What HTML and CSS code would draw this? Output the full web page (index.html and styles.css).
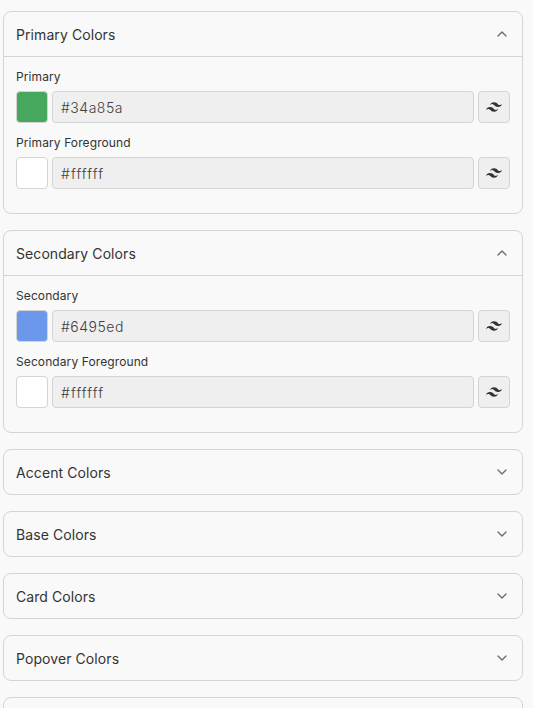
FILE: index.html
```html
<!DOCTYPE html>
<html lang="en">
<head>
<meta charset="utf-8">
<title>Theme colors</title>
<link rel="stylesheet" href="styles.css">
</head>
<body>
<svg class="defs" aria-hidden="true">
  <symbol id="up" viewBox="0 0 24 24"><path d="m18 15-6-6-6 6"/></symbol>
  <symbol id="down" viewBox="0 0 24 24"><path d="m6 9 6 6 6-6"/></symbol>
  <symbol id="tw" viewBox="0 0 24 24"><path d="M12.001 4.8c-3.2 0-5.2 1.6-6 4.8 1.2-1.6 2.6-2.2 4.2-1.8.913.228 1.565.89 2.288 1.624C13.666 10.618 15.027 12 18.001 12c3.2 0 5.2-1.6 6-4.8-1.2 1.6-2.6 2.2-4.2 1.8-.913-.228-1.565-.89-2.288-1.624C16.337 6.182 14.976 4.8 12.001 4.8zm-6 7.2c-3.2 0-5.2 1.6-6 4.8 1.2-1.6 2.6-2.2 4.2-1.8.913.228 1.565.89 2.288 1.624 1.177 1.194 2.538 2.576 5.512 2.576 3.2 0 5.2-1.6 6-4.8-1.2 1.6-2.6 2.2-4.2 1.8-.913-.228-1.565-.89-2.288-1.624C10.337 13.382 8.976 12 6.001 12z"/></symbol>
</svg>
<main class="panel">
  <section class="card">
    <header class="head"><span class="title">Primary Colors</span><svg class="chevron"><use href="#up"/></svg></header>
    <div class="body">
      <div class="field">
        <span class="label">Primary</span>
        <div class="row"><span class="swatch green"></span><span class="input"><span>#34a85a</span></span><button class="btn" aria-label="Tailwind colors"><svg class="tw"><use href="#tw"/></svg></button></div>
      </div>
      <div class="field">
        <span class="label">Primary Foreground</span>
        <div class="row"><span class="swatch"></span><span class="input"><span class="white-hex">#ffffff</span></span><button class="btn" aria-label="Tailwind colors"><svg class="tw"><use href="#tw"/></svg></button></div>
      </div>
    </div>
  </section>
  <section class="card">
    <header class="head"><span class="title">Secondary Colors</span><svg class="chevron"><use href="#up"/></svg></header>
    <div class="body">
      <div class="field">
        <span class="label">Secondary</span>
        <div class="row"><span class="swatch blue"></span><span class="input"><span>#6495ed</span></span><button class="btn" aria-label="Tailwind colors"><svg class="tw"><use href="#tw"/></svg></button></div>
      </div>
      <div class="field">
        <span class="label">Secondary Foreground</span>
        <div class="row"><span class="swatch"></span><span class="input"><span class="white-hex">#ffffff</span></span><button class="btn" aria-label="Tailwind colors"><svg class="tw"><use href="#tw"/></svg></button></div>
      </div>
    </div>
  </section>
  <section class="card"><header class="head"><span class="title">Accent Colors</span><svg class="chevron"><use href="#down"/></svg></header></section>
  <section class="card"><header class="head"><span class="title">Base Colors</span><svg class="chevron"><use href="#down"/></svg></header></section>
  <section class="card"><header class="head"><span class="title">Card Colors</span><svg class="chevron"><use href="#down"/></svg></header></section>
  <section class="card"><header class="head"><span class="title">Popover Colors</span><svg class="chevron"><use href="#down"/></svg></header></section>
  <section class="card"><header class="head"></header></section>
</main>
</body>
</html>
```
FILE: styles.css
```css
* { box-sizing: border-box; }
body {
  margin: 0;
  height: 708px;
  overflow: hidden;
  background: #f9f9f9;
  color: #333;
  font-family: Inter, "Liberation Sans", sans-serif;
}
.defs { display: none; }
.panel {
  display: flex;
  flex-direction: column;
  gap: 16px;
  width: 520px;
  margin: 11px 0 0 3px;
}
.card {
  flex: none;
  border: 1px solid #d4d4d4;
  border-radius: 8px;
}
.head {
  display: flex;
  align-items: center;
  justify-content: space-between;
  height: 44px;
  padding: 0 12px;
}
.title { font-size: 14px; line-height: 20px; letter-spacing: 0.08px; padding-top: 2px; }
.chevron {
  width: 16px;
  height: 16px;
  fill: none;
  stroke: #6b6b6b;
  stroke-width: 2;
  stroke-linecap: round;
  stroke-linejoin: round;
}
.body {
  display: flex;
  flex-direction: column;
  gap: 12px;
  padding: 12px 12px 24px;
  border-top: 1px solid #d4d4d4;
}
.field { display: flex; flex-direction: column; gap: 6px; }
.label { font-size: 12px; line-height: 16px; letter-spacing: 0.1px; }
.row { display: flex; gap: 4px; }
.swatch, .input, .btn {
  height: 32px;
  border: 1px solid #d4d4d4;
  border-radius: 4px;
}
.swatch { width: 32px; background: #fff; }
.green { background: #45a85d; }
.blue { background: #6c98eb; }
.input {
  flex: 1;
  display: flex;
  align-items: center;
  padding: 0 8px;
  background: #efefef;
  color: #404040;
  font-size: 14px;
  font-weight: 300;
  letter-spacing: 0.5px;
}
.white-hex { letter-spacing: 1.05px; }
.btn {
  display: flex;
  align-items: center;
  justify-content: center;
  width: 32px;
  padding: 0;
  background: #efefef;
}
.tw { width: 16px; height: 16px; fill: #333; }
```
